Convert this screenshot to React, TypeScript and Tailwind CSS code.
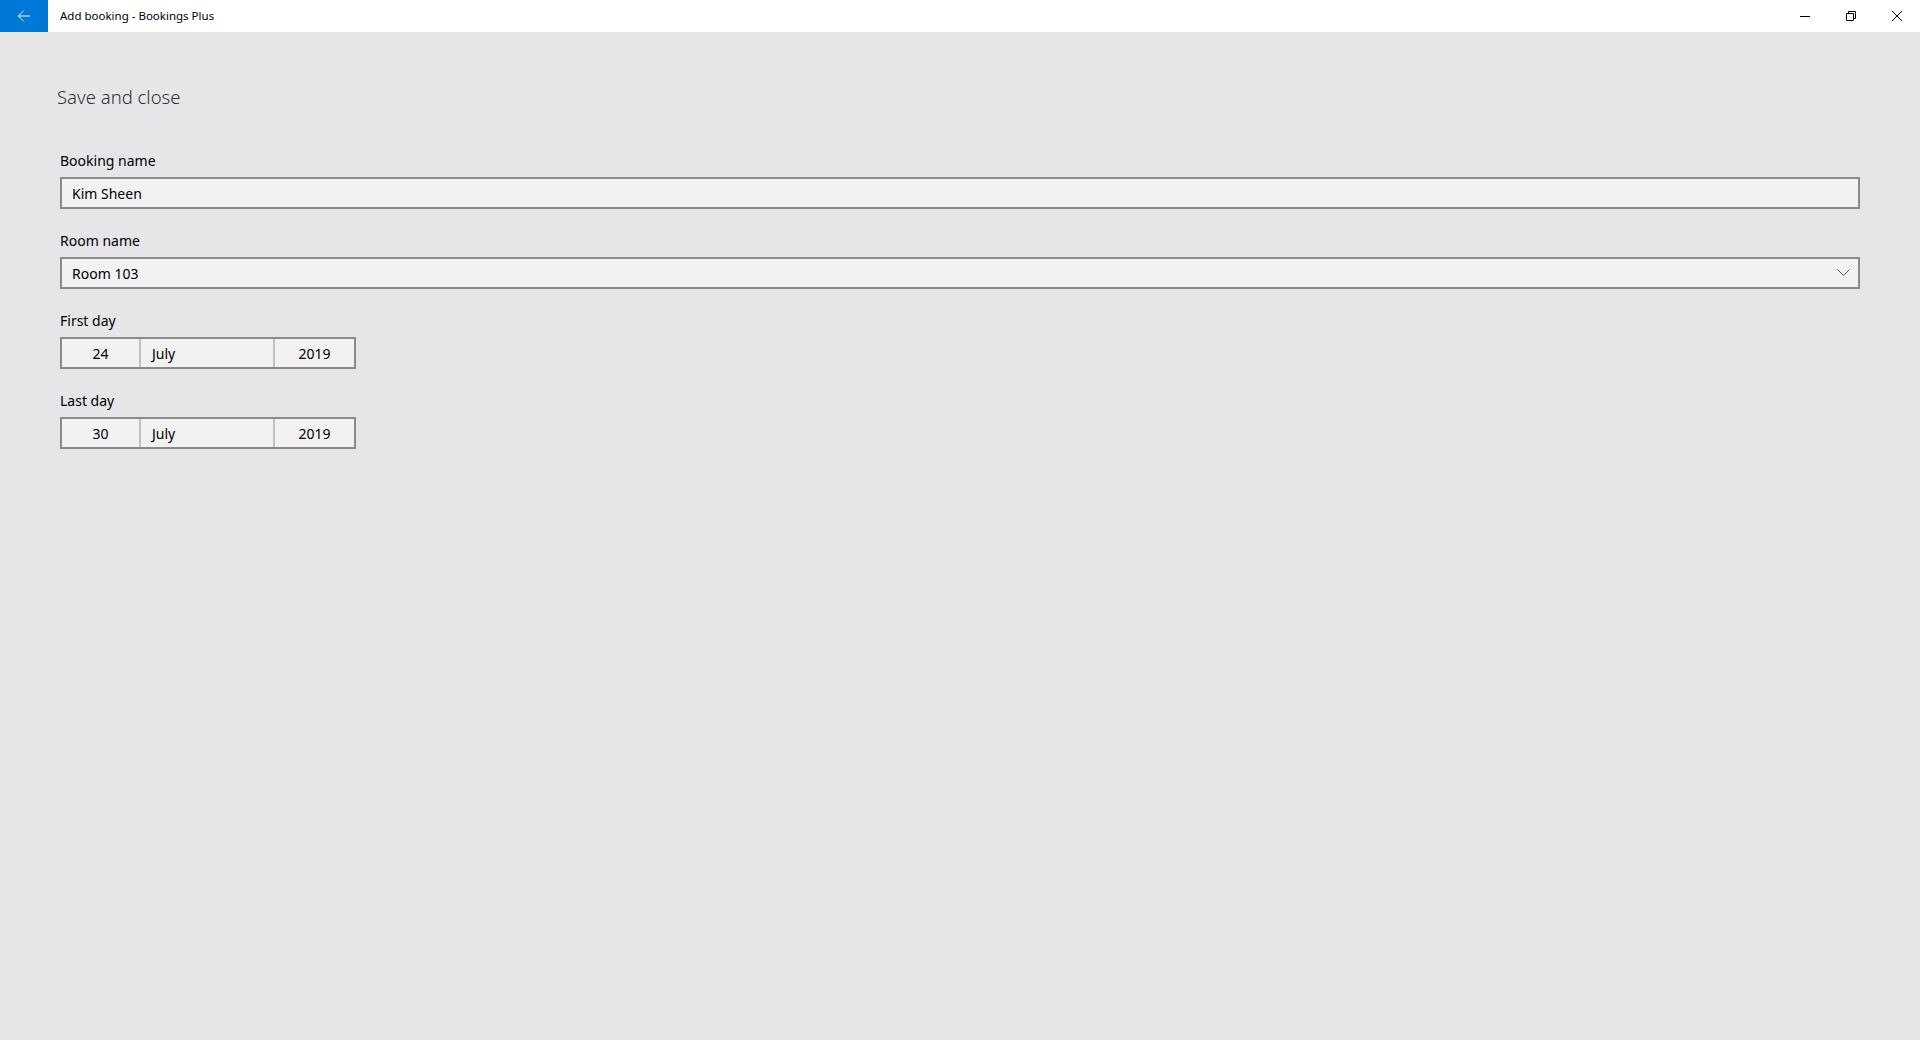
import React from "react";

const font = { fontFamily: '"Noto Sans", "Open Sans", sans-serif' } as React.CSSProperties;

function DateField({ day, month, year }: { day: string; month: string; year: string }) {
  return (
    <div className="flex h-[32px] w-[296px] border-2 border-[#8a8a8a] bg-[#f2f2f2] text-[14px] text-black">
      <div className="flex w-[79px] items-center justify-center border-r-2 border-[#c2c2c2]">{day}</div>
      <div className="flex w-[134px] items-center border-r-2 border-[#c2c2c2] pl-[11px]">{month}</div>
      <div className="flex flex-1 items-center justify-center">{year}</div>
    </div>
  );
}

export default function App() {
  return (
    <div className="flex h-[1040px] w-[1920px] flex-col bg-[#e6e6e9]" style={font}>
      <div className="flex h-[32px] items-center bg-white">
        <div className="flex h-[32px] w-[48px] items-center justify-center bg-[#0078d7]">
          <svg width="14" height="14" viewBox="0 0 16 16" fill="none" stroke="white" strokeWidth="1.1">
            <path d="M15 8H1.5M7.5 2L1.5 8l6 6" />
          </svg>
        </div>
        <div className="ml-[12px] text-[11.5px] text-black">Add booking - Bookings Plus</div>
        <div className="flex-1" />
        <div className="flex h-[32px] w-[46px] items-center justify-center">
          <svg width="10" height="10" viewBox="0 0 10 10"><path d="M0 5.5h10" stroke="black" strokeWidth="1" /></svg>
        </div>
        <div className="flex h-[32px] w-[46px] items-center justify-center">
          <svg width="10" height="10" viewBox="0 0 10 10" fill="none" stroke="black" strokeWidth="1">
            <path d="M0.5 2.5h7v7h-7z" />
            <path d="M2.5 2.5V0.5h7v7h-2" />
          </svg>
        </div>
        <div className="flex h-[32px] w-[46px] items-center justify-center">
          <svg width="10" height="10" viewBox="0 0 10 10" fill="none" stroke="black" strokeWidth="1">
            <path d="M0 0l10 10M10 0L0 10" />
          </svg>
        </div>
      </div>
      <div className="flex flex-col pl-[57px] pt-[51px]">
        <div className="text-[18.5px] font-light leading-[28px] text-[#333]">Save and close</div>
      </div>
      <div className="flex flex-col pl-[60px] pt-[40px]">
        <div className="text-[14px] leading-[20px] text-black">Booking name</div>
        <div className="mt-[6px] flex h-[32px] w-[1800px] items-center border-2 border-[#8a8a8a] bg-[#f2f2f2] pl-[10px] text-[14px] text-black">
          Kim Sheen
        </div>
        <div className="mt-[22px] text-[14px] leading-[20px] text-black">Room name</div>
        <div className="mt-[6px] flex h-[32px] w-[1800px] items-center justify-between border-2 border-[#8a8a8a] bg-[#f2f2f2] pl-[10px] pr-[8px] text-[14px] text-black">
          <span>Room 103</span>
          <svg width="13" height="8" viewBox="0 0 13 8" fill="none" stroke="#555" strokeWidth="1">
            <path d="M0.5 0.5l6 6 6-6" />
          </svg>
        </div>
        <div className="mt-[22px] text-[14px] leading-[20px] text-black">First day</div>
        <div className="mt-[6px]">
          <DateField day="24" month="July" year="2019" />
        </div>
        <div className="mt-[22px] text-[14px] leading-[20px] text-black">Last day</div>
        <div className="mt-[6px]">
          <DateField day="30" month="July" year="2019" />
        </div>
      </div>
    </div>
  );
}
